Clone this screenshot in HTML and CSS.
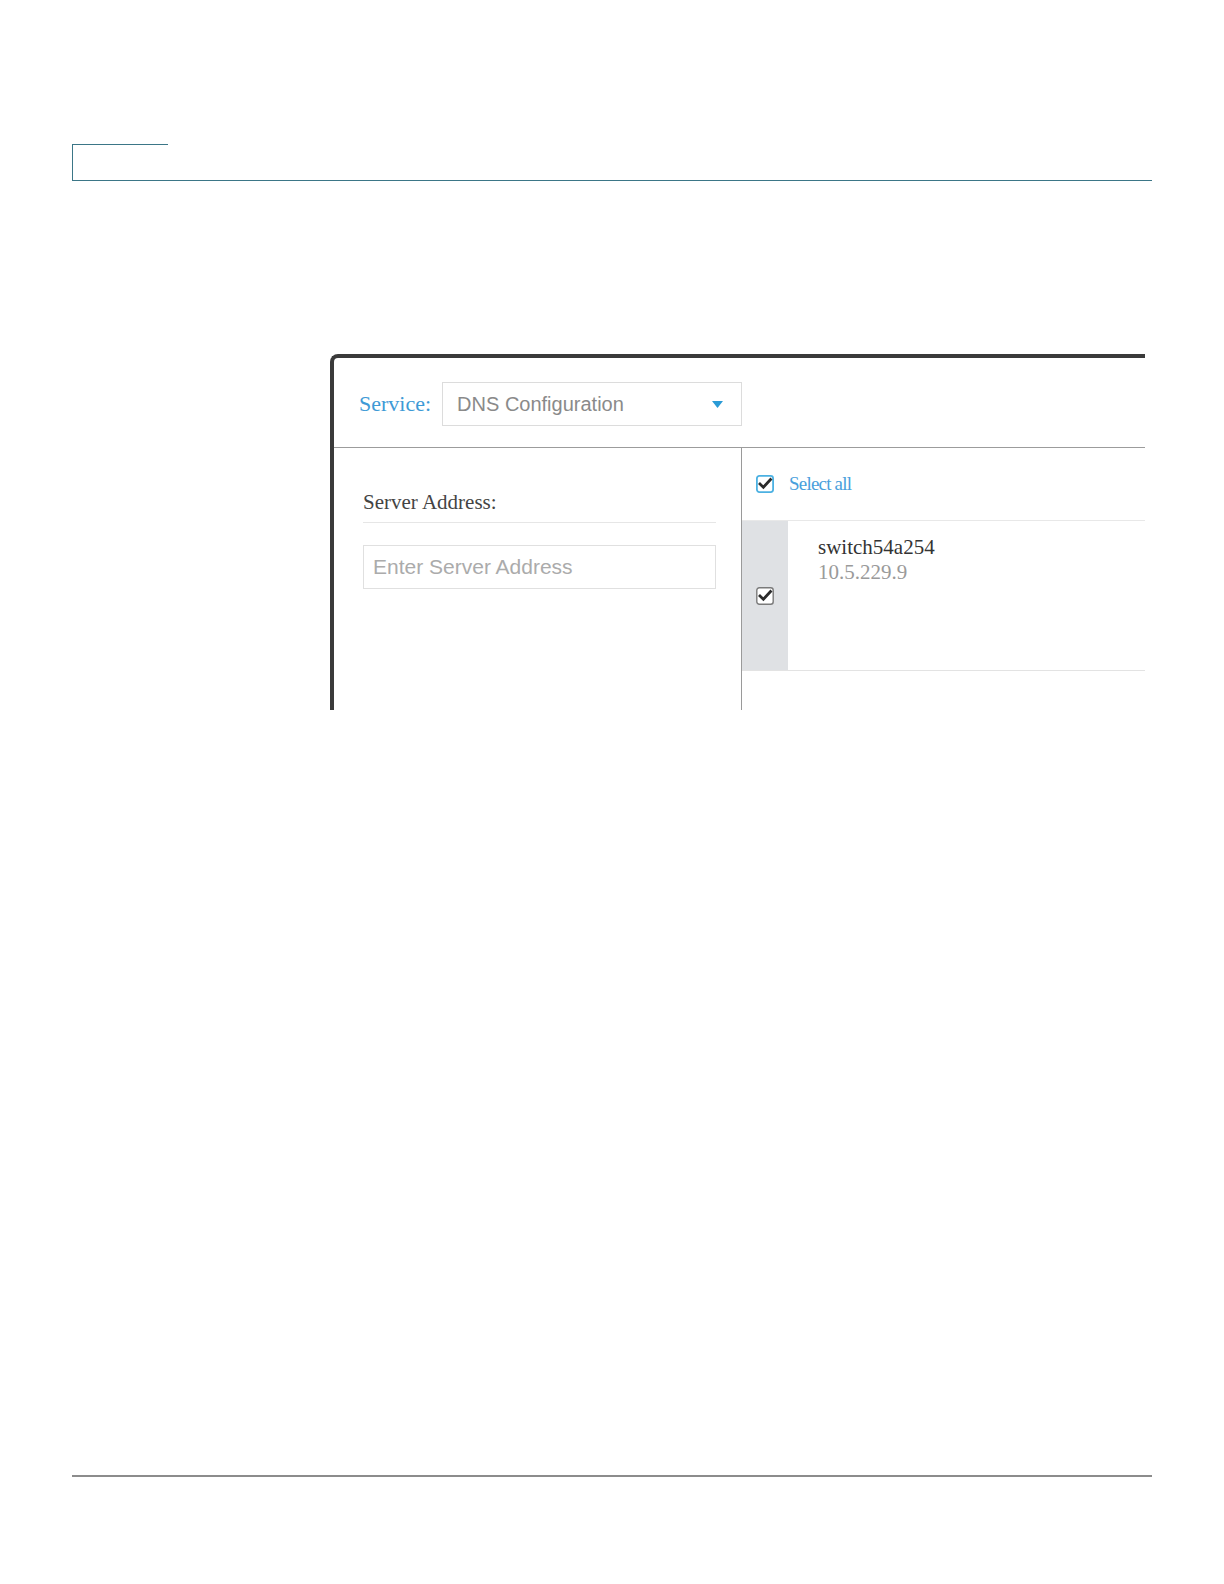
FILE: index.html
```html
<!DOCTYPE html>
<html>
<head>
<meta charset="utf-8">
<link rel="stylesheet" href="styles.css">
</head>
<body>
<div class="page">
  <div class="header"><div class="tab"></div></div>

  <div class="shot">
    <div class="toolbar">
      <span class="service-label">Service:</span>
      <div class="select">
        <span class="select-text">DNS Configuration</span>
        <svg class="caret" width="11" height="7" viewBox="0 0 11 7"><polygon points="0,0 11,0 5.5,7" fill="#2a9bd6"/></svg>
      </div>
    </div>
    <div class="panes">
      <div class="left">
        <div class="field-label">Server Address:</div>
        <div class="input">Enter Server Address</div>
      </div>
      <div class="right">
        <div class="select-all">
          <svg class="cb" width="18" height="18" viewBox="0 0 18 18">
            <rect x="0.9" y="0.9" width="16.2" height="16.2" rx="2.5" fill="#fff" stroke="#4cb1e2" stroke-width="1.8"/>
            <path d="M4 9 L7.4 12.3 L14.5 4.6" fill="none" stroke="#2b2b2b" stroke-width="2.8" stroke-linecap="square"/>
          </svg>
          <span class="select-all-text">Select all</span>
        </div>
        <div class="row">
          <div class="row-check">
            <svg class="cb" width="18" height="18" viewBox="0 0 18 18">
              <rect x="0.8" y="0.8" width="16.4" height="16.4" rx="2.5" fill="#fff" stroke="#7a7a7a" stroke-width="1.4"/>
              <path d="M4 9 L7.4 12.3 L14.5 4.6" fill="none" stroke="#2b2b2b" stroke-width="2.8" stroke-linecap="square"/>
            </svg>
          </div>
          <div class="row-info">
            <div class="dev-name">switch54a254</div>
            <div class="dev-ip">10.5.229.9</div>
          </div>
        </div>
      </div>
    </div>
  </div>

  <div class="footer"></div>
</div>
</body>
</html>
```
FILE: styles.css
```css
html, body {
  margin: 0;
  padding: 0;
  background: #fff;
}

.page {
  padding: 144px 72px 0 72px;
  width: 1080px;
}

.header {
  height: 36px;
  border-bottom: 1.5px solid #3b7687;
}

.tab {
  width: 96px;
  height: 36px;
  box-sizing: border-box;
  border-top: 1.5px solid #3b7687;
  border-left: 1.5px solid #3b7687;
}

.shot {
  margin-top: 173px;
  margin-left: 258px;
  width: 815px;
  height: 356px;
  box-sizing: border-box;
  border-top: 4px solid #3a3a3a;
  border-left: 4px solid #3a3a3a;
  border-top-left-radius: 8px;
  overflow: hidden;
  display: flex;
  flex-direction: column;
}

.toolbar {
  height: 90px;
  box-sizing: border-box;
  border-bottom: 1.5px solid #9c9c9c;
  display: flex;
  align-items: flex-start;
  padding: 24px 0 0 25px;
}

.service-label {
  font-family: "Liberation Serif", serif;
  font-size: 22px;
  color: #3e9ad6;
  line-height: 44px;
  margin-right: 11px;
}

.select {
  width: 300px;
  height: 44px;
  box-sizing: border-box;
  border: 1px solid #dcdcdc;
  display: flex;
  align-items: center;
  justify-content: space-between;
  padding: 0 18px 0 14px;
}

.select-text {
  font-family: "Liberation Sans", Arial, sans-serif;
  font-size: 20px;
  color: #8a8a8a;
}

.caret {
  display: block;
}

.panes {
  flex: 1;
  display: flex;
}

.left {
  width: 408px;
  box-sizing: border-box;
  border-right: 1.5px solid #9a9a9a;
  padding: 42px 25px 0 29px;
}

.field-label {
  font-family: "Liberation Serif", serif;
  font-size: 21px;
  line-height: 24px;
  color: #444;
  padding-bottom: 8px;
  border-bottom: 1.5px solid #e6e6e6;
  margin-bottom: 22px;
}

.input {
  height: 44px;
  box-sizing: border-box;
  border: 1.5px solid #e0e0e0;
  padding-left: 9px;
  display: flex;
  align-items: center;
  font-family: "Liberation Sans", Arial, sans-serif;
  font-size: 21px;
  color: #ababab;
}

.right {
  flex: 1;
}

.select-all {
  height: 73px;
  box-sizing: border-box;
  border-bottom: 1.5px solid #e8e8e8;
  display: flex;
  align-items: center;
  padding-left: 14px;
}

.cb {
  display: block;
}

.select-all-text {
  margin-left: 15px;
  font-family: "Liberation Serif", serif;
  font-size: 19px;
  letter-spacing: -0.8px;
  color: #4aa0dc;
}

.row {
  height: 150px;
  box-sizing: border-box;
  border-bottom: 1.5px solid #e3e3e3;
  display: flex;
}

.row-check {
  width: 46px;
  background: #dfe1e4;
  display: flex;
  align-items: center;
  justify-content: center;
}

.row-info {
  padding: 14px 0 0 30px;
  font-family: "Liberation Serif", serif;
  font-size: 21px;
  line-height: 25px;
}

.dev-name {
  color: #333;
}

.dev-ip {
  color: #9a9a9a;
}

.footer {
  margin-top: 765px;
  height: 2px;
  background: #8c8c8c;
}
```
